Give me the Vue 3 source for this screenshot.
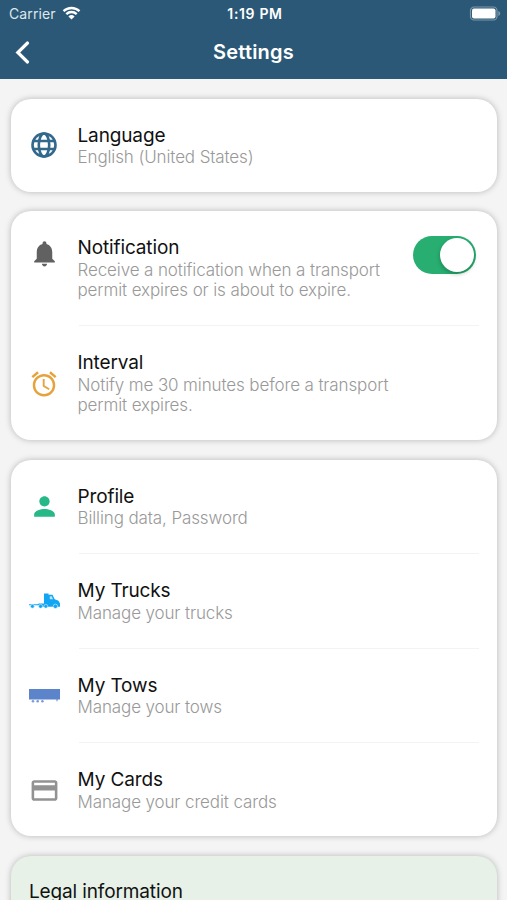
<script setup>
import { ref } from 'vue'

const notify = ref(true)

const groups = [
  [
    { icon: 'globe', title: 'Language', lines: ['English (United States)'] }
  ],
  [
    {
      icon: 'bell',
      title: 'Notification',
      lines: ['Receive a notification when a transport', 'permit expires or is about to expire.'],
      toggle: true
    },
    {
      icon: 'alarm',
      title: 'Interval',
      lines: ['Notify me 30 minutes before a transport', 'permit expires.']
    }
  ],
  [
    { icon: 'person', title: 'Profile', lines: ['Billing data, Password'] },
    { icon: 'truck', title: 'My Trucks', lines: ['Manage your trucks'] },
    { icon: 'tow', title: 'My Tows', lines: ['Manage your tows'] },
    { icon: 'card', title: 'My Cards', lines: ['Manage your credit cards'] }
  ]
]
</script>

<template>
  <div class="screen">
    <header class="header">
      <div class="status-bar">
        <div class="carrier">
          <span>Carrier</span>
          <svg class="wifi" viewBox="0 0 18 14">
            <path d="M1 5.2a11.6 11.6 0 0 1 16 0M3.8 8.1a7.5 7.5 0 0 1 10.4 0" />
            <path class="wifi-dot" d="M9 13.5 5.9 10.4a4.5 4.5 0 0 1 6.2 0z" />
          </svg>
        </div>
        <span class="time">1:19 PM</span>
        <div class="battery-wrap">
          <svg class="battery" viewBox="0 0 32 16">
            <rect class="battery-shell" x="1.500" y="1" width="26.500" height="13" rx="3.600" />
            <rect class="battery-level" x="3" y="2.500" width="23.500" height="10" rx="2" />
            <path class="battery-tip" d="M29.300 5v5c1.300-.5 1.900-1.400 1.900-2.500s-.6-2-1.900-2.500z" />
          </svg>
        </div>
      </div>
      <div class="nav-bar">
        <button class="back" aria-label="Back">
          <svg viewBox="0 0 17 25"><path d="M13.500 3 3.800 12.500l9.700 9.500" /></svg>
        </button>
        <h1>Settings</h1>
      </div>
    </header>

    <main class="content">
      <section v-for="(group, i) in groups" :key="i" class="card">
        <div v-for="row in group" :key="row.title" class="row" :class="{ 'has-toggle': row.toggle }">
          <div class="icon">
            <svg v-if="row.icon === 'globe'" class="globe" viewBox="0 0 26 26">
              <circle cx="13" cy="13" r="11.500" />
              <ellipse cx="13" cy="13" rx="5.200" ry="11.500" />
              <path d="M2 9h22M2 17h22" />
            </svg>
            <svg v-else-if="row.icon === 'bell'" class="bell" viewBox="0 0 24 24">
              <path d="M12 22c1.100 0 2-.9 2-2h-4c0 1.100.89 2 2 2zm6-6v-5c0-3.070-1.640-5.640-4.500-6.320V4c0-.83-.67-1.500-1.500-1.500s-1.500.67-1.500 1.500v.68C7.630 5.360 6 7.920 6 11v5l-2 2v1h16v-1l-2-2z" />
            </svg>
            <svg v-else-if="row.icon === 'alarm'" class="alarm" viewBox="0 0 24 24">
              <path d="M22 5.720l-4.600-3.860-1.290 1.530 4.600 3.860L22 5.720zM7.880 3.390L6.600 1.860 2 5.710l1.290 1.530 4.590-3.850zM12.500 8H11v6l4.750 2.850.75-1.230-4-2.370V8zM12 4c-4.970 0-9 4.030-9 9s4.020 9 9 9a9 9 0 0 0 0-18zm0 16c-3.870 0-7-3.130-7-7s3.130-7 7-7 7 3.130 7 7-3.130 7-7 7z" />
            </svg>
            <svg v-else-if="row.icon === 'person'" class="person" viewBox="0 0 24 24">
              <path d="M12 12c2.210 0 4-1.790 4-4s-1.790-4-4-4-4 1.790-4 4 1.790 4 4 4zm0 2c-2.670 0-8 1.340-8 4v2h16v-2c0-2.660-5.330-4-8-4z" />
            </svg>
            <svg v-else-if="row.icon === 'truck'" class="truck" viewBox="0 0 31 16">
              <path d="M15 .5h4.500v1.300h4l2.200 4.400 3.800 1.500 1.500 2.800v3.300H11v-1.500H0v-1.100h8.500l1.500-.8h5z" />
              <path class="cutout" d="M20.800 3.300h1.900l1.400 3h-3.300z" />
              <g class="wheels">
                <circle cx="3.400" cy="13.300" r="1.900" />
                <circle cx="11.600" cy="13.300" r="2" />
                <circle cx="16.800" cy="13.300" r="1.900" />
                <circle cx="26.400" cy="13.300" r="2.200" />
              </g>
            </svg>
            <svg v-else-if="row.icon === 'tow'" class="tow" viewBox="0 0 31 14">
              <path d="M0 0h31v10.500H0zM27.500 10.500h1v1.700h-1z" />
              <g class="tow-wheels">
                <circle cx="4" cy="12.200" r="1.300" />
                <circle cx="8.700" cy="12.200" r="1.300" />
                <circle cx="13.400" cy="12.200" r="1.300" />
              </g>
            </svg>
            <svg v-else class="credit" viewBox="0 0 24 24">
              <path d="M20 4H4c-1.110 0-1.990.89-1.990 2L2 18c0 1.110.89 2 2 2h16c1.110 0 2-.89 2-2V6c0-1.110-.89-2-2-2zm0 14H4v-6h16v6zm0-10H4V6h16v2z" />
            </svg>
          </div>
          <div class="text">
            <div class="title">{{ row.title }}</div>
            <div v-for="line in row.lines" :key="line" class="line">{{ line }}</div>
          </div>
          <button
            v-if="row.toggle"
            class="switch"
            :class="{ on: notify }"
            role="switch"
            :aria-checked="notify"
            @click="notify = !notify"
          >
            <span class="knob"></span>
          </button>
        </div>
      </section>

      <section class="card legal">
        <div class="title">Legal information</div>
      </section>
    </main>
  </div>
</template>

<style>
body {
  margin: 0;
  background: #f4f4f4;
}
</style>

<style scoped>
.screen {
  height: 900px;
  overflow: hidden;
  background: #f4f4f4;
  font-family: Inter, "Liberation Sans", sans-serif;
}

.header {
  box-sizing: border-box;
  height: 79px;
  background: #2b5876;
  color: #fff;
}

.status-bar {
  display: grid;
  grid-template-columns: 1fr auto 1fr;
  align-items: center;
  height: 27px;
  padding: 0 6px 0 9px;
  font-size: 14px;
}

.carrier {
  display: flex;
  align-items: center;
  gap: 6px;
  color: #dfe7ec;
  letter-spacing: 0.1px;
}

.wifi {
  width: 19px;
  height: 14px;
  margin-top: -1px;
  fill: none;
  stroke: #fff;
  stroke-width: 2.3;
}

.wifi .wifi-dot {
  fill: #fff;
  stroke: none;
}

.time {
  font-weight: 600;
  font-size: 14px;
  letter-spacing: 0.65px;
}

.battery-wrap {
  display: flex;
  justify-content: flex-end;
}

.battery {
  width: 32px;
  height: 16px;
}

.battery-shell {
  fill: none;
  stroke: #7d97a9;
  stroke-width: 1.2;
}

.battery-level {
  fill: #fff;
}

.battery-tip {
  fill: #7d97a9;
}

.nav-bar {
  display: grid;
  grid-template-columns: 44px 1fr 44px;
  align-items: center;
  height: 50px;
}

.back {
  display: flex;
  padding: 0 0 0 14px;
  border: 0;
  background: none;
}

.back svg {
  width: 17px;
  height: 25px;
  fill: none;
  stroke: #fff;
  stroke-width: 3.2;
  stroke-linecap: round;
}

h1 {
  margin: 0;
  text-align: center;
  font-size: 20px;
  font-weight: 600;
  letter-spacing: 0.2px;
}

.content {
  display: flex;
  flex-direction: column;
  gap: 19.8px;
  padding: 19.7px 10px 0 10.5px;
}

.card {
  border-radius: 20px;
  background: #fff;
  box-shadow: 0 0 6px rgba(0, 0, 0, 0.25);
}

.row {
  display: flex;
  align-items: center;
  box-sizing: border-box;
  min-height: 93px;
  padding: 25px 21.5px 24px 18px;
}

/* divider starts at the text column and stops short of the card edge */
.row + .row::before {
  content: "";
  align-self: flex-start;
  width: 400px;
  height: 1px;
  margin: -26px -400px 0 0;
  transform: translateX(50px);
  background: #f3f3f3;
}

.row + .row {
  margin-top: 1.5px;
}

.icon {
  display: flex;
  justify-content: center;
  flex: none;
  width: 31px;
  margin-right: 18px;
}

.text {
  flex: 1;
  white-space: nowrap;
}

.title {
  color: #111;
  font-size: 19px;
  letter-spacing: -0.13px;
  line-height: 23.5px;
}

.line {
  color: #999;
  font-size: 17px;
  font-weight: 300;
  letter-spacing: -0.12px;
  line-height: 20.5px;
}

.has-toggle {
  align-items: flex-start;
}

.has-toggle .icon {
  padding-top: 2px;
}

.globe {
  width: 26px;
  height: 26px;
  margin-top: -1px;
  fill: none;
  stroke: #32688c;
  stroke-width: 2.6;
}

.bell {
  width: 31px;
  height: 31px;
  fill: #616161;
}

.alarm {
  width: 30px;
  height: 30px;
  fill: #e6a23c;
}

.person {
  width: 31px;
  height: 31px;
  fill: #27b888;
}

.truck {
  width: 31px;
  height: 16px;
  fill: #12a5f4;
}

.truck .cutout {
  fill: #b9e3fb;
}

.truck .wheels {
  stroke: #fff;
  stroke-width: 0.5;
}

.tow {
  width: 31px;
  height: 14px;
  fill: #5b84cb;
}

.tow-wheels {
  opacity: 0.8;
}

.credit {
  width: 31px;
  height: 31px;
  fill: #929292;
}

.switch {
  display: flex;
  flex: none;
  box-sizing: border-box;
  width: 62.5px;
  height: 38px;
  padding: 2px;
  border: 0;
  border-radius: 19px;
  background: #ccc;
}

.switch.on {
  justify-content: flex-end;
  background: #27ae70;
}

.knob {
  width: 34px;
  height: 34px;
  border-radius: 50%;
  background: #fff;
  box-shadow: 0 2px 4px rgba(0, 0, 0, 0.25);
}

.legal {
  height: 120px;
  padding: 24px 18.5px;
  background: #e7f1e8;
}
</style>
